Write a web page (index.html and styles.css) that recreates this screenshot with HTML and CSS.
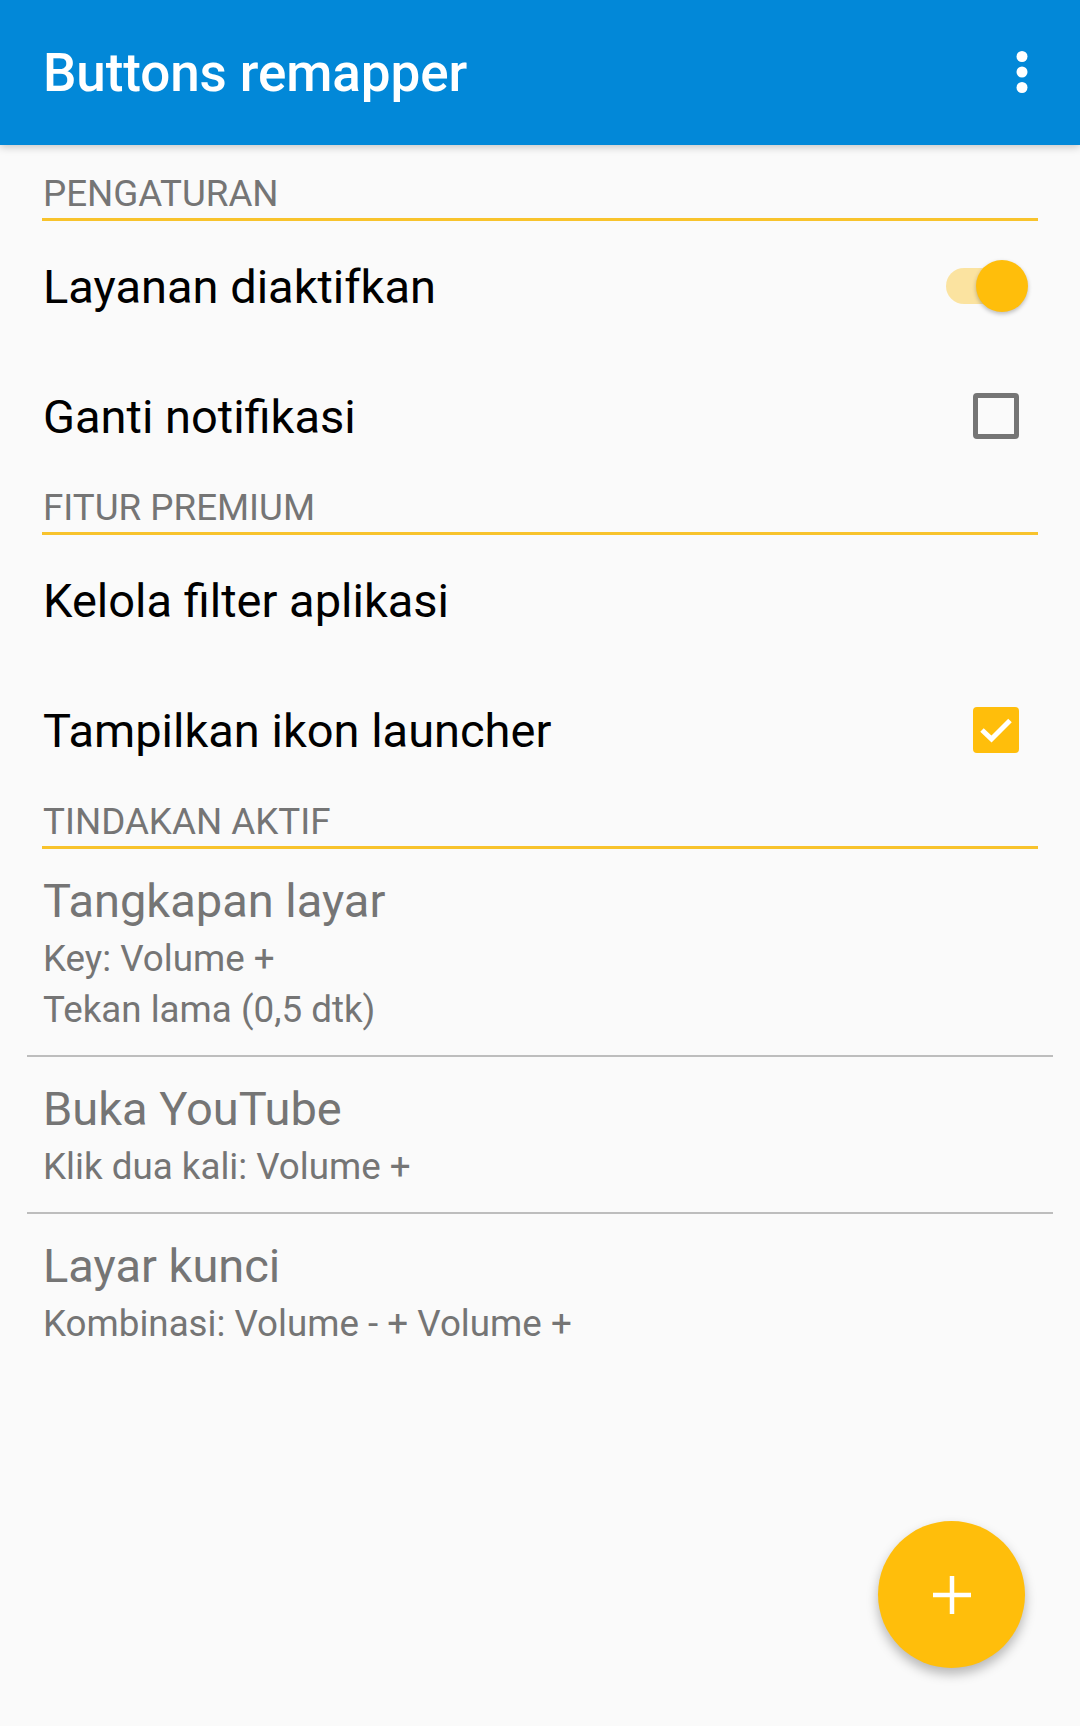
FILE: index.html
```html
<!DOCTYPE html>
<html lang="id">
<head>
    <meta charset="UTF-8">
    <meta name="viewport" content="width=device-width, initial-scale=1.0">
    <title>Buttons remapper</title>
    <link rel="stylesheet" href="styles.css">
</head>
<body>

<div class="screen">
    <header class="appbar">
        <h1>Buttons remapper</h1>
        <span class="overflow">
            <svg width="12" height="42" viewBox="0 0 12 42">
                <circle cx="6" cy="5.5" r="5.5" fill="#fff"/>
                <circle cx="6" cy="21" r="5.5" fill="#fff"/>
                <circle cx="6" cy="36.5" r="5.5" fill="#fff"/>
            </svg>
        </span>
    </header>

    <main class="prefs">
        <h2 class="category first">PENGATURAN</h2>
        <div class="pref">
            <span class="pref-title">Layanan diaktifkan</span>
            <span class="switch">
                <span class="track"></span>
                <span class="thumb"></span>
            </span>
        </div>
        <div class="pref">
            <span class="pref-title">Ganti notifikasi</span>
            <span class="checkbox"></span>
        </div>

        <h2 class="category">FITUR PREMIUM</h2>
        <div class="pref">
            <span class="pref-title">Kelola filter aplikasi</span>
        </div>
        <div class="pref">
            <span class="pref-title">Tampilkan ikon launcher</span>
            <span class="checkbox checked">
                <svg width="34" height="26" viewBox="0 0 34 26">
                    <path d="M3 13 L12.5 22 L31 3.5" fill="none" stroke="#fff" stroke-width="5"/>
                </svg>
            </span>
        </div>

        <h2 class="category">TINDAKAN AKTIF</h2>
        <div class="actions">
            <div class="action">
                <div class="action-title">Tangkapan layar</div>
                <div class="action-sub">Key: Volume +</div>
                <div class="action-sub">Tekan lama (0,5 dtk)</div>
            </div>
            <div class="action">
                <div class="action-title">Buka YouTube</div>
                <div class="action-sub">Klik dua kali: Volume +</div>
            </div>
            <div class="action last">
                <div class="action-title">Layar kunci</div>
                <div class="action-sub">Kombinasi: Volume - + Volume +</div>
            </div>
        </div>
    </main>

    <button class="fab">
        <svg width="38" height="38" viewBox="0 0 38 38">
            <path d="M19 0 V38 M0 19 H38" stroke="#fff" stroke-width="4.5"/>
        </svg>
    </button>
</div>

</body>
</html>
```

FILE: styles.css
```css
body {
    margin: 0;
    padding: 0;
    font-family: Roboto, "Noto Sans", sans-serif;
    background-color: #fafafa;
}
.screen {
    position: relative;
    width: 1080px;
    height: 1726px;
    overflow: hidden;
    background-color: #fafafa;
}
.appbar {
    height: 145px;
    background-color: #0288d8;
    display: flex;
    align-items: center;
    justify-content: space-between;
    padding: 0 52px 0 43px;
    box-shadow: 0 2px 8px rgba(0, 0, 0, 0.22);
    position: relative;
    z-index: 1;
}
.appbar h1 {
    margin: 0;
    color: #fff;
    font-size: 53px;
    font-weight: 500;
    letter-spacing: -0.1px;
    line-height: 60px;
}
.overflow {
    display: flex;
    align-items: center;
    margin-top: -2px;
}
.prefs {
    display: flex;
    flex-direction: column;
}
.category {
    margin: 0 42px;
    padding: 7px 0 4px 1px;
    font-size: 36.75px;
    font-weight: 400;
    line-height: 40px;
    color: #757575;
    border-bottom: 3px solid #f8c32c;
}
.category.first {
    margin-top: 22px;
}
.pref {
    height: 130px;
    display: flex;
    align-items: center;
    justify-content: space-between;
    padding: 0 0 0 43px;
}
.pref-title {
    font-size: 47px;
    color: #000;
}
.switch {
    display: flex;
    align-items: center;
    margin-right: 52px;
}
.track {
    width: 78px;
    height: 36px;
    border-radius: 18px;
    background-color: #fbe3a0;
}
.thumb {
    width: 52px;
    height: 52px;
    border-radius: 50%;
    background-color: #ffbe0b;
    margin-left: -48px;
    box-shadow: 0 2px 4px rgba(0, 0, 0, 0.25);
}
.checkbox {
    width: 36px;
    height: 36px;
    border: 5px solid #757575;
    border-radius: 4px;
    margin-right: 61px;
    display: flex;
    align-items: center;
    justify-content: center;
}
.checkbox.checked {
    border-color: #ffbe0b;
    background-color: #ffbe0b;
}
.actions {
    display: flex;
    flex-direction: column;
}
.action {
    margin: 0 27px;
    padding: 20px 16px 20px 16px;
    border-bottom: 2px solid #bdbdbd;
    color: #757575;
}
.action.last {
    border-bottom: none;
}
.action-title {
    font-size: 47px;
    line-height: 64px;
}
.action-sub {
    font-size: 36.75px;
    line-height: 51px;
}
.fab {
    position: absolute;
    right: 55px;
    bottom: 58px;
    width: 147px;
    height: 147px;
    border: none;
    border-radius: 50%;
    background-color: #ffbe0b;
    box-shadow: 0 6px 12px rgba(0, 0, 0, 0.28);
    display: flex;
    align-items: center;
    justify-content: center;
    padding: 0;
}
```
